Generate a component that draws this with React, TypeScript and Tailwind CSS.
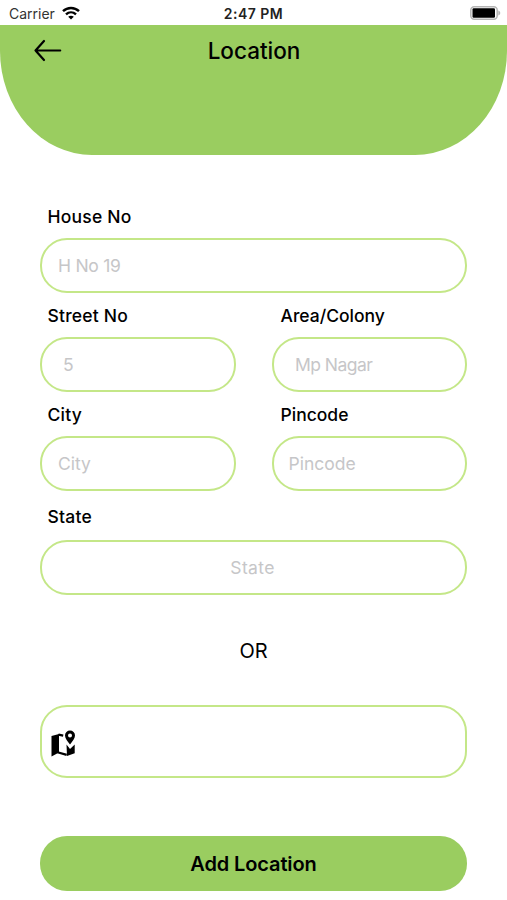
import clsx from 'clsx'

interface FieldProps {
  label: string
  placeholder: string
  className?: string
  labelClassName?: string
  inputClassName?: string
}

function Field({ label, placeholder, className, labelClassName, inputClassName }: FieldProps) {
  return (
    <label className={clsx('flex flex-col', className)}>
      <span
        className={clsx(
          'text-[17.5px] leading-[20px] font-medium text-black',
          labelClassName ?? 'h-[31px] pl-[7.5px] tracking-[0.012em]'
        )}
      >
        {label}
      </span>
      <input
        type="text"
        placeholder={placeholder}
        className={clsx(
          'h-[55px] w-full rounded-[27px] border-2 border-[#c4e788] bg-white text-[17.5px] text-black outline-none placeholder:text-[#c6c6c8] focus:border-[#9acd60]',
          inputClassName ?? 'px-4'
        )}
      />
    </label>
  )
}

function StatusBar() {
  return (
    <div className="relative flex h-[25px] items-center justify-between pt-[2px] pr-[6px] pl-[9px]">
      <div className="flex items-center gap-[7px]">
        <span className="text-[14px] leading-none text-[#333]">Carrier</span>
        <svg className="-mt-[2px] h-[14px] w-[18px]" viewBox="0 0 18 14" fill="none" stroke="#000" strokeWidth="2.4">
          <path d="M1 5.2C5.5.9 12.5.9 17 5.2" />
          <path d="M4 8.4c2.9-2.7 7.1-2.7 10 0" />
          <path d="M9 13.5 6.2 10.7c1.6-1.4 4-1.4 5.6 0z" fill="#000" stroke="none" />
        </svg>
      </div>
      <span className="absolute left-1/2 -translate-x-1/2 text-[14px] leading-none font-semibold tracking-[0.035em] text-[#222]">
        2:47 PM
      </span>
      <svg className="-mt-[2px] h-[14px] w-[31px]" viewBox="0 0 31 14">
        <rect x="0.8" y="0.8" width="26.4" height="12.4" rx="3.4" fill="#fff" stroke="#b5b5b5" strokeWidth="1.5" />
        <rect x="2.5" y="2.3" width="22.5" height="9.4" rx="1.2" fill="#000" />
        <path d="M28.3 4.5c2.6 1 2.6 4 0 5z" fill="#b5b5b5" />
      </svg>
    </div>
  )
}

export default function App() {
  return (
    <div className="flex h-[900px] w-[507px] flex-col overflow-hidden bg-white font-[Inter,'Liberation_Sans',sans-serif]">
      <StatusBar />

      {/* Header */}
      <header className="relative h-[130px] shrink-0 bg-[#9acd60] pt-[10px] [border-radius:0_0_92px_92px/0_0_104px_104px]">
        <button type="button" aria-label="Back" className="absolute top-[14px] left-[34px]">
          <svg
            className="h-[23px] w-[28px]"
            viewBox="0 0 28 23"
            fill="none"
            stroke="#000"
            strokeWidth="2.2"
            strokeLinecap="round"
            strokeLinejoin="round"
          >
            <path d="M26.2 11.5H1.5M10 2 1.5 11.5 10 21" />
          </svg>
        </button>
        <h1 className="pl-[1px] text-center text-[22.5px] leading-[31px] font-medium text-black">Location</h1>
      </header>

      {/* Address form */}
      <form className="flex flex-1 flex-col px-10 pt-[52px]">
        <Field label="House No" placeholder="H No 19" inputClassName="px-4 tracking-[-0.015em]" />
        <div className="mt-[13px] flex gap-9">
          <Field label="Street No" placeholder="5" className="flex-1" inputClassName="px-[21px]" />
          <Field
            label="Area/Colony"
            placeholder="Mp Nagar"
            className="flex-1"
            labelClassName="h-[31px] pl-[9px]"
            inputClassName="px-[21.5px] tracking-[-0.03em]"
          />
        </div>
        <div className="mt-[13px] flex gap-9">
          <Field label="City" placeholder="City" className="flex-1" />
          <Field
            label="Pincode"
            placeholder="Pincode"
            className="flex-1"
            labelClassName="h-[31px] pl-[9px]"
            inputClassName="px-[15px]"
          />
        </div>
        <Field
          label="State"
          placeholder="State"
          className="mt-4"
          labelClassName="h-[33px] pl-[7.5px] tracking-[0.012em]"
          inputClassName="pl-[14px] pr-4 text-center tracking-[0.02em]"
        />

        <p className="mt-[41px] text-center text-[20px] leading-[30px] text-black">OR</p>

        {/* Pick from map */}
        <button
          type="button"
          aria-label="Choose on map"
          className="mt-[39px] flex h-[73px] w-full items-center rounded-[27px] border-2 border-[#c4e788] bg-white pl-[9px]"
        >
          <svg className="mt-[5px] h-[28px] w-[25px]" viewBox="0 0 25 28">
            <path d="M.5 6 8 4v18.5L.5 26.5z" />
            <path d="M7.5 4.6 12.2 5.6M6.5 22.3l9.2 2.6" fill="none" stroke="#000" strokeWidth="2.2" />
            <path d="M15.5 14.5 19 19l4.7-4.5v8.8L16 26z" />
            <path
              fillRule="evenodd"
              d="M19 .5a5 5 0 0 0-5 5c0 3.3 2.7 5.8 5 9 2.3-3.2 5-5.7 5-9a5 5 0 0 0-5-5zm0 3a2 2 0 1 1 0 4 2 2 0 0 1 0-4z"
            />
          </svg>
        </button>

        <button
          type="submit"
          className="mt-[58px] h-[55px] w-full shrink-0 rounded-[27px] bg-[#9acd60] text-[20px] font-semibold tracking-[-0.006em] text-black"
        >
          Add Location
        </button>
      </form>
    </div>
  )
}
